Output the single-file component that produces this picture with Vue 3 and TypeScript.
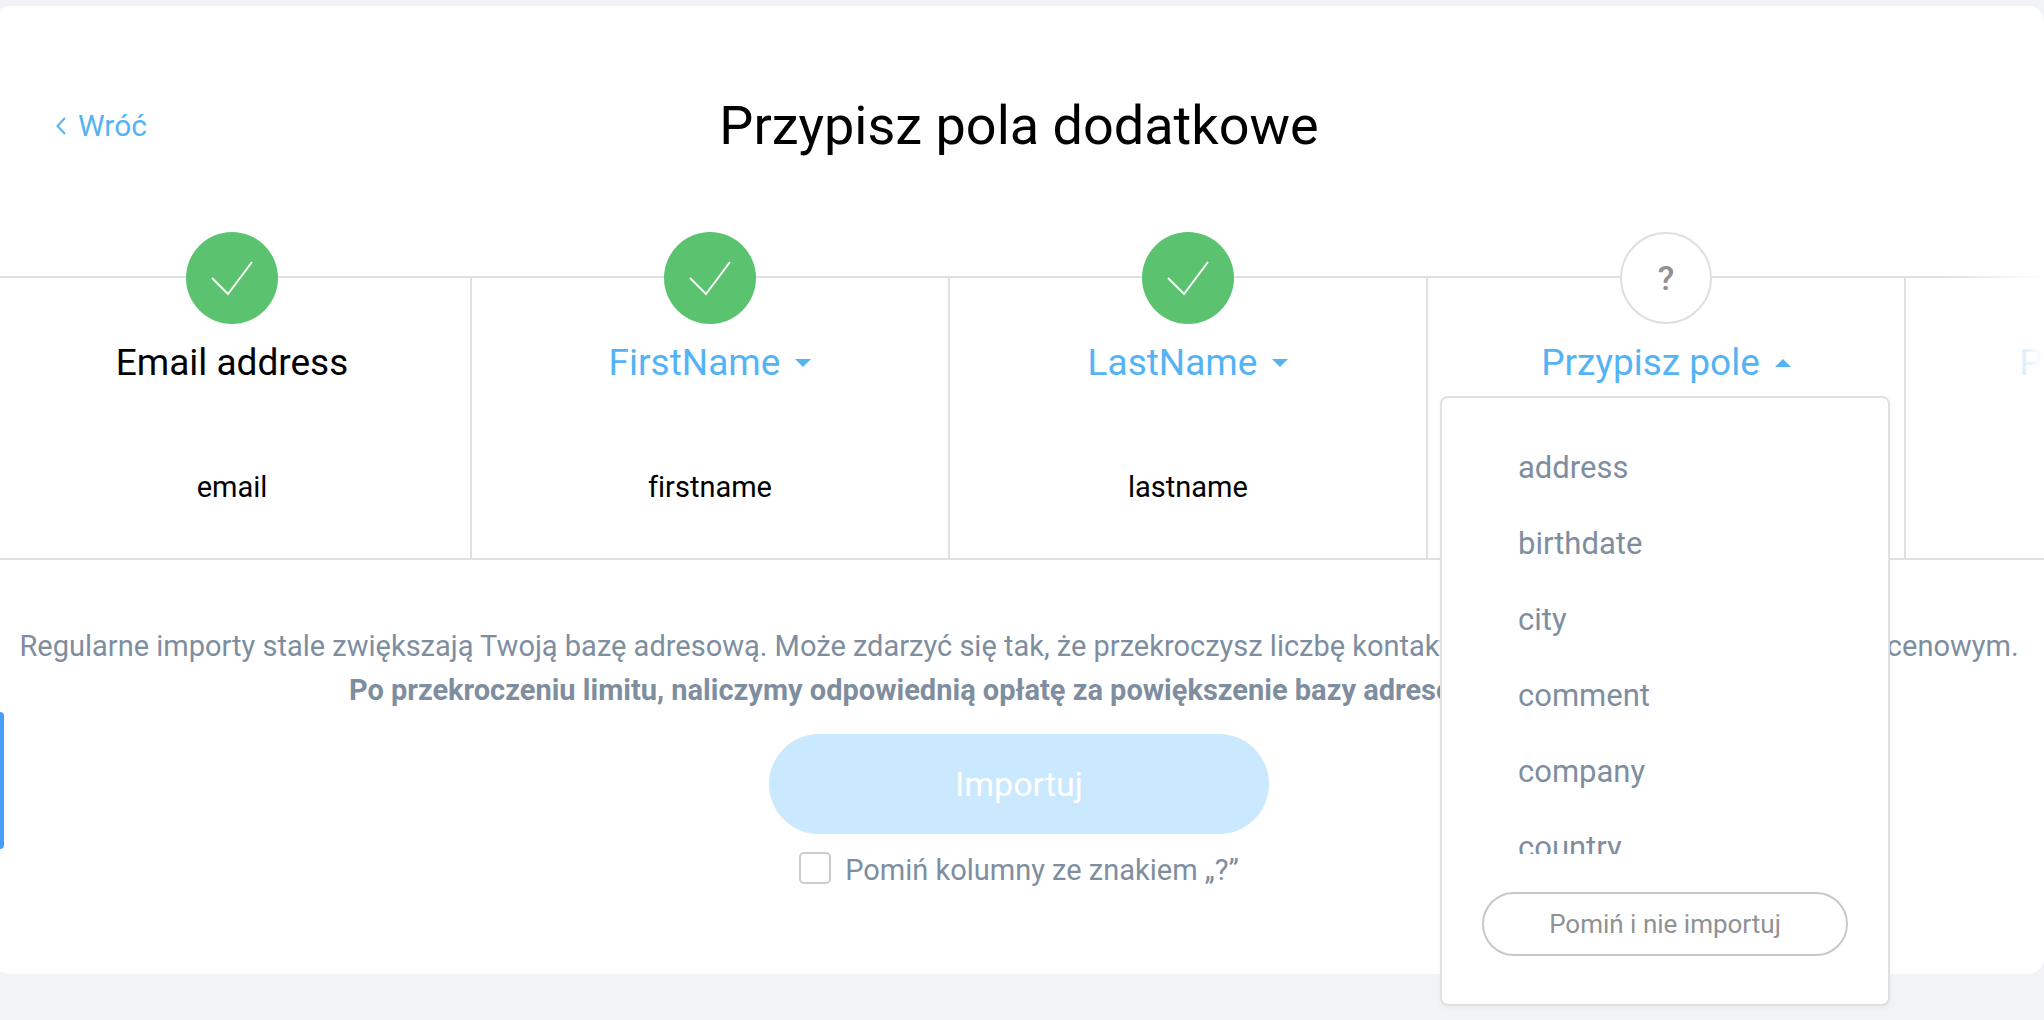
<script setup lang="ts">
import { ref } from 'vue'

interface Column {
  label: string
  sample: string
  assigned: boolean
  fixed?: boolean
  open?: boolean
}

const columns = ref<Column[]>([
  { label: 'Email address', sample: 'email', assigned: true, fixed: true },
  { label: 'FirstName', sample: 'firstname', assigned: true },
  { label: 'LastName', sample: 'lastname', assigned: true },
  { label: 'Przypisz pole', sample: '', assigned: false, open: true },
  { label: 'Przypisz pole', sample: '', assigned: false },
])

const fields: string[] = ['address', 'birthdate', 'city', 'comment', 'company', 'country']

const skipUnknown = ref(false)

function toggle(column: Column) {
  column.open = !column.open
}

function assign(column: Column, field: string) {
  column.label = field
  column.assigned = true
  column.open = false
}
</script>

<template>
  <div class="page">
    <main class="card">
      <header class="header">
        <a class="back" href="#">
          <svg class="chevron" viewBox="0 0 10 18" aria-hidden="true">
            <path d="M9 1 1.500 9 9 17" />
          </svg>
          Wróć
        </a>
        <h1 class="title">Przypisz pola dodatkowe</h1>
      </header>

      <section class="columns">
        <div v-for="(column, index) in columns" :key="index" class="column">
          <span v-if="column.assigned" class="status done">
            <svg viewBox="0 0 92 92" aria-hidden="true">
              <path d="M26 46 42 62 66 30" />
            </svg>
          </span>
          <span v-else class="status unknown">?</span>

          <p v-if="column.fixed" class="name">{{ column.label }}</p>
          <button
            v-else
            class="name picker"
            type="button"
            :aria-expanded="!!column.open"
            @click="toggle(column)"
          >
            {{ column.label }}
            <svg class="caret" :class="{ up: column.open }" viewBox="0 0 16 8" aria-hidden="true">
              <path d="M0 0h16L8 8z" />
            </svg>
          </button>

          <p class="sample">{{ column.sample }}</p>

          <div v-if="column.open" class="menu">
            <ul class="options">
              <li v-for="field in fields" :key="field">
                <button class="option" type="button" @click="assign(column, field)">{{ field }}</button>
              </li>
            </ul>
            <button class="skip" type="button" @click="toggle(column)">Pomiń i nie importuj</button>
          </div>
        </div>
      </section>

      <section class="footer">
        <p class="note">
          Regularne importy stale zwiększają Twoją bazę adresową. Może zdarzyć się tak, że przekroczysz liczbę kontaktów, określoną w aktualnym planie cenowym.<br />
          <strong>Po przekroczeniu limitu, naliczymy odpowiednią opłatę za powiększenie bazy adresowej o nowe osoby.</strong>
        </p>
        <button class="import" type="button" disabled>Importuj</button>
        <label class="check" for="skip-unknown">
          <input id="skip-unknown" v-model="skipUnknown" type="checkbox" />
          Pomiń kolumny ze znakiem „?”
        </label>
      </section>
    </main>
    <div class="side-tab"></div>
  </div>
</template>

<style>
body {
  margin: 0;
  background: #f2f3f7;
}
</style>

<style scoped>
.page {
  position: relative;
  box-sizing: border-box;
  min-height: 100vh;
  padding: 6px 0 46px;
  overflow: hidden;
  background: #f2f3f7;
  color: #000;
  font-family: Roboto, 'Liberation Sans', sans-serif;
  font-variant-ligatures: none;
}

.page button {
  font-family: inherit;
}

.card {
  box-sizing: border-box;
  margin-left: -6px;
  padding-bottom: 84px;
  border-radius: 16px;
  background: #fff;
}

.header {
  display: grid;
  grid-template-columns: 1fr auto 1fr;
  align-items: center;
  height: 240px;
  padding: 0 62px;
  box-sizing: border-box;
  margin-bottom: 30px;
}

.back {
  display: flex;
  align-items: center;
  gap: 12px;
  color: #54b3f5;
  font-size: 30px;
  line-height: 36px;
  text-decoration: none;
}

.chevron {
  width: 10px;
  height: 18px;
  fill: none;
  stroke: currentColor;
  stroke-width: 2;
}

.title {
  margin: 0;
  font-size: 54px;
  font-weight: 400;
  line-height: 64px;
}

.columns {
  position: relative;
  display: flex;
  height: 280px;
  border-top: 2px solid #e0e0e0;
  border-bottom: 2px solid #e0e0e0;
}

.columns::after {
  content: '';
  position: absolute;
  top: -2px;
  right: 0;
  bottom: 0;
  width: 100px;
  background: linear-gradient(to right, rgba(255, 255, 255, 0), #fff);
  pointer-events: none;
}

.column {
  position: relative;
  display: flex;
  flex: 0 0 478px;
  flex-direction: column;
  align-items: center;
  box-sizing: border-box;
  border-right: 2px solid #e0e0e0;
}

.status {
  display: flex;
  align-items: center;
  justify-content: center;
  box-sizing: border-box;
  width: 92px;
  height: 92px;
  margin-top: -46px;
  border-radius: 50%;
}

.done {
  background: #5bc36f;
}

.done svg {
  width: 92px;
  height: 92px;
  fill: none;
  stroke: #fff;
  stroke-width: 2;
}

.unknown {
  border: 2px solid #e0e0e0;
  background: #fff;
  color: #8f9194;
  font-size: 34px;
  font-weight: 500;
}

.name {
  margin: 17px 0 0;
  font-size: 37px;
  line-height: 44px;
  white-space: nowrap;
}

.picker {
  display: flex;
  align-items: center;
  gap: 15px;
  padding: 0;
  border: 0;
  background: none;
  color: #54b3f5;
  cursor: pointer;
}

.caret {
  width: 16px;
  height: 8px;
  fill: currentColor;
}

.caret.up {
  transform: rotate(180deg);
}

.sample {
  margin: 84px 0 0;
  font-size: 29px;
  line-height: 36px;
}

.menu {
  position: absolute;
  z-index: 2;
  top: 118px;
  left: 12px;
  box-sizing: border-box;
  width: 450px;
  padding: 32px 40px 48px;
  border: 2px solid #e0e0e0;
  border-radius: 8px;
  background: #fff;
  box-shadow: 0 2px 4px rgba(0, 0, 0, 0.04);
}

.options {
  height: 424px;
  margin: 0 0 38px;
  padding: 0;
  overflow: hidden;
  list-style: none;
}

.option {
  display: block;
  width: 100%;
  height: 76px;
  padding: 0 36px;
  border: 0;
  background: none;
  color: #7e8e9f;
  font-size: 31px;
  line-height: 76px;
  text-align: left;
}

.skip {
  display: block;
  width: 100%;
  height: 64px;
  border: 2px solid #c8c8c8;
  border-radius: 32px;
  background: #fff;
  color: #8f9194;
  font-size: 26px;
}

.footer {
  display: flex;
  flex-direction: column;
  align-items: center;
  color: #7e8e9f;
  font-size: 29px;
}

.note {
  margin: 64px 0 22px;
  line-height: 44px;
  text-align: center;
  white-space: nowrap;
}

.note strong {
  font-weight: 700;
}

.import {
  width: 500px;
  height: 100px;
  padding: 0;
  border: 0;
  border-radius: 50px;
  background: #cbe9fe;
  color: #fff;
  font-size: 34px;
}

.check {
  display: flex;
  align-items: flex-start;
  gap: 14px;
  margin-top: 16px;
  line-height: 40px;
}

.check input {
  box-sizing: border-box;
  width: 32px;
  height: 32px;
  margin: 2px 0 0;
  border: 2px solid #ccc;
  border-radius: 5px;
  background: #fff;
  appearance: none;
}

.check input:checked {
  background: #54b3f5;
}

.side-tab {
  position: absolute;
  top: 712px;
  left: -4px;
  width: 8px;
  height: 137px;
  border-radius: 4px;
  background: #489dfb;
}
</style>
